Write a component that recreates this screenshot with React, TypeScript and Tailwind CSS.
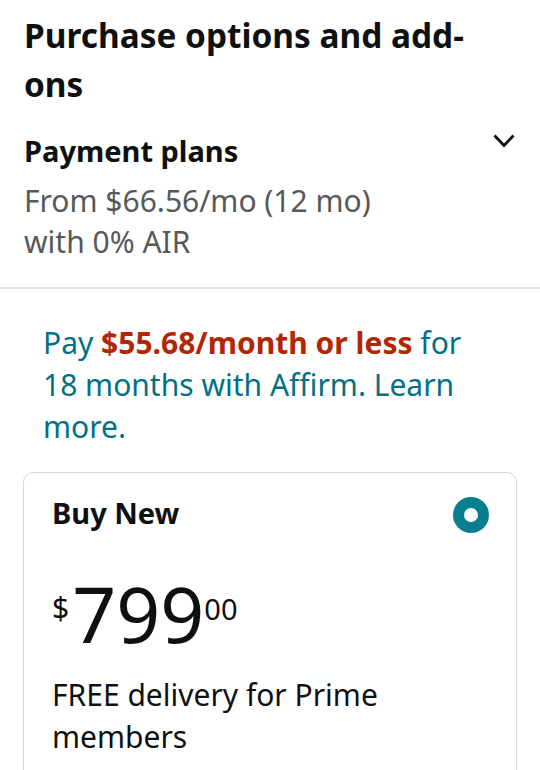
export default function App() {
  return (
    <div className="min-h-screen bg-white text-[#0f1111] font-['Noto_Sans',sans-serif]">
      <div className="px-6 pt-[11px]">
        <h1 className="text-[33.4px] font-bold leading-[49px]">
          Purchase options and add-
          <br />
          ons
        </h1>

        <div className="mt-[22px] flex items-start justify-between">
          <div>
            <h2 className="text-[29px] font-bold leading-[40px]">Payment plans</h2>
            <p className="mt-[9px] text-[30px] leading-[41px] text-[#565959]">
              From $66.56/mo (12 mo)
              <br />
              with 0% AIR
            </p>
          </div>
          <svg width="22" height="15" viewBox="0 0 22 15" className="mt-[3px] mr-[1px]">
            <path d="M1.5 1.5 L11 11.5 L20.5 1.5" fill="none" stroke="#0f1111" strokeWidth="2.8" />
          </svg>
        </div>
      </div>

      <div className="mt-[25px] h-[2px] bg-[#dfe2e2]" />

      <div className="px-[43px] pt-[33px]">
        <p className="text-[30px] leading-[42px] text-[#007185]">
          Pay <span className="font-bold text-[#b12704]">$55.68/month or less</span> for
          <br />
          18 months with Affirm. Learn
          <br />
          more.
        </p>
      </div>

      <div className="mx-[23px] mt-[24px] rounded-[10px] border border-[#d5d9d9] px-[28px] pt-[20px] pb-6">
        <div className="flex items-start justify-between">
          <span className="text-[29px] font-bold leading-[40px]">Buy New</span>
          <span className="mt-[4px] mr-[-1px] flex h-[36px] w-[36px] items-center justify-center rounded-full bg-[#087f8e]">
            <span className="h-[14px] w-[14px] rounded-full bg-white" />
          </span>
        </div>

        <div className="mt-[42px] flex items-start">
          <span className="mt-[18px] text-[30px] leading-none">$</span>
          <span className="ml-[3px] text-[77px] leading-[77px]">799</span>
          <span className="mt-[19px] text-[29px] leading-none">00</span>
        </div>

        <p className="mt-[22px] text-[30px] leading-[42px]">
          FREE delivery for Prime
          <br />
          members
        </p>
      </div>
    </div>
  );
}
